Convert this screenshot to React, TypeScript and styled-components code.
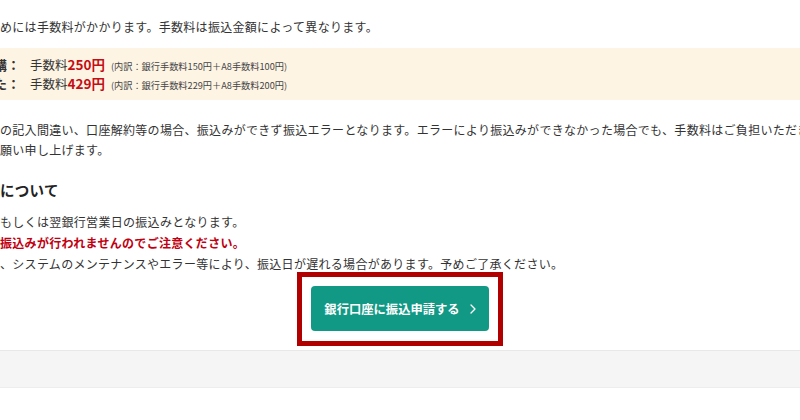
import styled, { createGlobalStyle } from 'styled-components'

const GlobalStyle = createGlobalStyle`
	html, body {
		margin: 0;
		padding: 0;
		background: #fff;
		overflow: hidden;
	}
	body {
		font-family: "Noto Sans CJK JP", "Noto Sans", sans-serif;
		color: #333;
		font-size: 12px;
		letter-spacing: 0.3px;
	}
`

const Page = styled.div`
	display: flex;
	flex-direction: column;
	width: 800px;
	height: 420px;
`
const Content = styled.main`
	display: flex;
	flex-direction: column;
	padding-top: 17px;
`
const Text = styled.p<{ $top?: number }>`
	margin: ${p => p.$top ?? 0}px 0 0;
	line-height: 20px;
	white-space: nowrap;
`
const FeeBox = styled.div`
	margin-top: 11px;
	padding: 6px 0 8px;
	background-color: #fdf4e4;
	display: grid;
	grid-auto-rows: 19px;
	align-items: center;
`
const FeeRow = styled.div`
	display: flex;
	align-items: baseline;
	white-space: nowrap;
`
const FeeLabel = styled.span`
	width: 30px;
	margin-left: -6px;
	padding-right: 6px;
	font-weight: 700;
	font-size: 13px;
	letter-spacing: 0;
	box-sizing: content-box;
	flex: none;
`
const FeeName = styled.span`
	font-size: 12.5px;
	letter-spacing: 0;
`
const FeeAmount = styled.span`
	color: #c40d14;
	font-weight: 700;
	font-size: 13.5px;
	letter-spacing: 0;
`
const FeeNote = styled.span`
	margin-left: 6px;
	font-size: 9.2px;
	letter-spacing: 0;
	color: #444;
`
const Heading = styled.h3`
	margin: 20px 0 0;
	font-size: 14.5px;
	line-height: 20px;
	font-weight: 700;
	color: #222;
	letter-spacing: 0.3px;
`
const Notes = styled.ul`
	list-style: none;
	margin: 11px 0 0;
	padding: 0;
	line-height: 21px;
	white-space: nowrap;
`
const Note = styled.li<{ $alert?: boolean }>`
	color: ${p => (p.$alert ? '#c00010' : 'inherit')};
	font-weight: ${p => (p.$alert ? 700 : 400)};
`
const Highlight = styled.div`
	align-self: center;
	margin-top: -2px;
	border: 5px solid #b00000;
	padding: 9px 9px 10px;
`
const ApplyButton = styled.button`
	display: flex;
	align-items: center;
	justify-content: center;
	gap: 10px;
	width: 178px;
	height: 45px;
	padding: 0;
	border: none;
	border-radius: 4px;
	background-color: #119985;
	color: #fff;
	font-family: inherit;
	font-size: 12.3px;
	font-weight: 700;
	letter-spacing: 0;
	cursor: pointer;
`
const Chevron = () => (
	<svg width="6" height="10" viewBox="0 0 6 10" fill="none">
		<path d="M1 1l4 4-4 4" stroke="#fff" strokeWidth="1.3" strokeLinecap="round" strokeLinejoin="round" />
	</svg>
)
const Footer = styled.footer`
	margin-top: 4px;
	height: 36px;
	background-color: #f5f5f5;
	border-top: 1px solid #e8e8e8;
	border-bottom: 1px solid #ededed;
`

const fees = [
	{ label: '購：', amount: '250円', note: '(内訳：銀行手数料150円＋A8手数料100円)' },
	{ label: 'た：', amount: '429円', note: '(内訳：銀行手数料229円＋A8手数料200円)' },
]

export default function App() {
	return <Page>
		<GlobalStyle />
		<Content>
			<Text>めには手数料がかかります。手数料は振込金額によって異なります。</Text>
			<FeeBox>
				{fees.map(f => <FeeRow key={f.amount}>
					<FeeLabel>{f.label}</FeeLabel>
					<FeeName>手数料</FeeName>
					<FeeAmount>{f.amount}</FeeAmount>
					<FeeNote>{f.note}</FeeNote>
				</FeeRow>)}
			</FeeBox>
			<Text $top={20}>
				の記入間違い、口座解約等の場合、振込みができず振込エラーとなります。エラーにより振込みができなかった場合でも、手数料はご負担いただきます。
				<br />願い申し上げます。
			</Text>
			<Heading>について</Heading>
			<Notes>
				<Note>もしくは翌銀行営業日の振込みとなります。</Note>
				<Note $alert>振込みが行われませんのでご注意ください。</Note>
				<Note>、システムのメンテナンスやエラー等により、振込日が遅れる場合があります。予めご了承ください。</Note>
			</Notes>
			<Highlight>
				<ApplyButton>
					銀行口座に振込申請する
					<Chevron />
				</ApplyButton>
			</Highlight>
		</Content>
		<Footer />
	</Page>
}
